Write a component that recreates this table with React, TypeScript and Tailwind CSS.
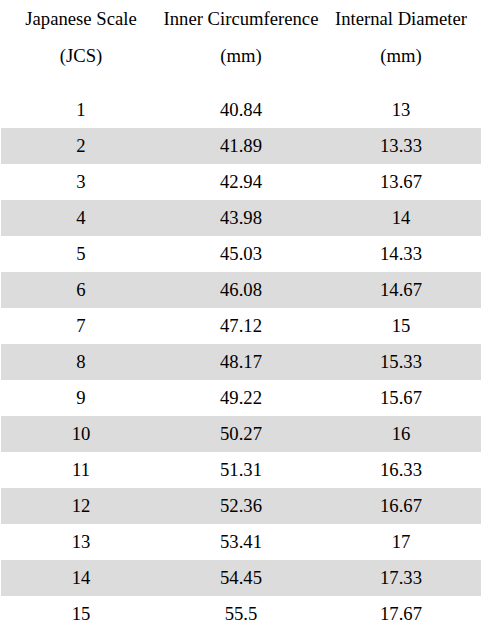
const rows: [string, string, string][] = [
  ["1", "40.84", "13"],
  ["2", "41.89", "13.33"],
  ["3", "42.94", "13.67"],
  ["4", "43.98", "14"],
  ["5", "45.03", "14.33"],
  ["6", "46.08", "14.67"],
  ["7", "47.12", "15"],
  ["8", "48.17", "15.33"],
  ["9", "49.22", "15.67"],
  ["10", "50.27", "16"],
  ["11", "51.31", "16.33"],
  ["12", "52.36", "16.67"],
  ["13", "53.41", "17"],
  ["14", "54.45", "17.33"],
  ["15", "55.5", "17.67"],
];

const heads: [string, string][] = [
  ["Japanese Scale", "(JCS)"],
  ["Inner Circumference", "(mm)"],
  ["Internal Diameter", "(mm)"],
];

export default function App() {
  return (
    <div className="w-[482px] h-[634px] bg-white text-black text-[18.67px] px-[1px] font-['Liberation_Serif','Times_New_Roman',serif]">
      <div className="grid grid-cols-3 h-[92px] content-start">
        {heads.map(([a, b]) => (
          <div key={a} className="flex flex-col items-center whitespace-nowrap">
            <div className="h-[37px] leading-[37px]">{a}</div>
            <div className="h-[37px] leading-[37px]">{b}</div>
          </div>
        ))}
      </div>
      {rows.map((r, i) => (
        <div
          key={r[0]}
          className={i % 2 === 1 ? "grid grid-cols-3 h-[36px] items-center bg-[#dcdcdc]" : "grid grid-cols-3 h-[36px] items-center"}
        >
          {r.map((c, j) => (
            <div key={j} className="text-center leading-[36px]">
              {c}
            </div>
          ))}
        </div>
      ))}
    </div>
  );
}
